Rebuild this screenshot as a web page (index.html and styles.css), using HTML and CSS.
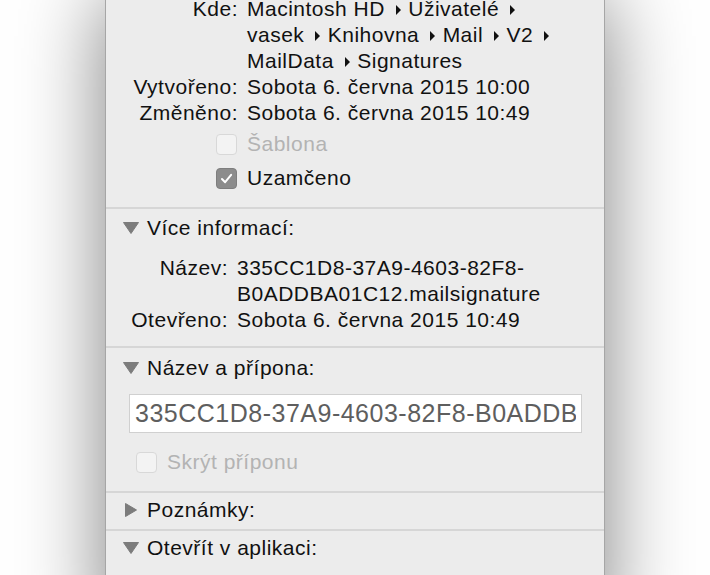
FILE: index.html
```html
<!DOCTYPE html>
<html lang="cs">
<head>
<meta charset="utf-8">
<title>Informace</title>
<link rel="stylesheet" href="styles.css">
</head>
<body>
<div class="window">
  <section class="sec sec-general">
    <div class="info info-general">
      <span class="label">Kde:</span>
      <span class="value path">
        <span class="seg">Macintosh HD<svg class="crumb" viewBox="0 0 5 10"><polygon points="0,0 5,5 0,10"/></svg></span>
        <span class="seg">Uživatelé<svg class="crumb" viewBox="0 0 5 10"><polygon points="0,0 5,5 0,10"/></svg></span>
        <span class="seg">vasek<svg class="crumb" viewBox="0 0 5 10"><polygon points="0,0 5,5 0,10"/></svg></span>
        <span class="seg">Knihovna<svg class="crumb" viewBox="0 0 5 10"><polygon points="0,0 5,5 0,10"/></svg></span>
        <span class="seg">Mail<svg class="crumb" viewBox="0 0 5 10"><polygon points="0,0 5,5 0,10"/></svg></span>
        <span class="seg">V2<svg class="crumb" viewBox="0 0 5 10"><polygon points="0,0 5,5 0,10"/></svg></span>
        <span class="seg">MailData<svg class="crumb" viewBox="0 0 5 10"><polygon points="0,0 5,5 0,10"/></svg></span>
        <span class="seg">Signatures</span>
      </span>
      <span class="label">Vytvořeno:</span>
      <span class="value">Sobota 6. června 2015 10:00</span>
      <span class="label">Změněno:</span>
      <span class="value">Sobota 6. června 2015 10:49</span>
    </div>
    <div class="info info-general checks">
      <span class="cb cb-disabled"></span>
      <span class="value muted">Šablona</span>
      <span class="cb cb-checked"><svg viewBox="0 0 21 21"><path d="M5.5 11 L9 14.6 L15.6 6.4"/></svg></span>
      <span class="value">Uzamčeno</span>
    </div>
  </section>

  <section class="sec sec-more">
    <div class="disclosure">
      <span class="tri"><svg class="tri-down" viewBox="0 0 16 12"><polygon points="0.5,0.5 15.5,0.5 8,11.5"/></svg></span>
      <span>Více informací:</span>
    </div>
    <div class="info info-more">
      <span class="label">Název:</span>
      <span class="value">335CC1D8-37A9-4603-82F8-<wbr>B0ADDBA01C12.mailsignature</span>
      <span class="label">Otevřeno:</span>
      <span class="value">Sobota 6. června 2015 10:49</span>
    </div>
  </section>

  <section class="sec sec-name">
    <div class="disclosure">
      <span class="tri"><svg class="tri-down" viewBox="0 0 16 12"><polygon points="0.5,0.5 15.5,0.5 8,11.5"/></svg></span>
      <span>Název a přípona:</span>
    </div>
    <div class="name-body">
      <input class="namefield" type="text" value="335CC1D8-37A9-4603-82F8-B0ADDBA01C12.mailsignature" readonly>
      <div class="checkrow">
        <span class="cb cb-disabled"></span>
        <span class="muted">Skrýt příponu</span>
      </div>
    </div>
  </section>

  <section class="sec sec-notes">
    <div class="disclosure">
      <span class="tri"><svg class="tri-right" viewBox="0 0 12 14"><polygon points="0.5,0.5 11.5,7 0.5,13.5"/></svg></span>
      <span>Poznámky:</span>
    </div>
  </section>

  <section class="sec sec-open">
    <div class="disclosure">
      <span class="tri"><svg class="tri-down" viewBox="0 0 16 12"><polygon points="0.5,0.5 15.5,0.5 8,11.5"/></svg></span>
      <span>Otevřít v aplikaci:</span>
    </div>
  </section>
</div>
</body>
</html>
```

FILE: styles.css
```css
html, body {
  margin: 0;
  padding: 0;
  background: #ffffff;
}

body {
  overflow: hidden;
}

.window {
  width: 500px;
  box-sizing: border-box;
  margin: -4px auto 0;
  background: #ececec;
  border-left: 1px solid #a6a6a6;
  border-right: 1px solid #a6a6a6;
  box-shadow: 0 0 80px rgba(0, 0, 0, 0.5);
  font-family: "Helvetica Neue", "Liberation Sans", Arial, sans-serif;
  font-size: 21px;
  line-height: 26px;
  letter-spacing: 0.5px;
  color: #111111;
}

.sec + .sec {
  border-top: 2px solid #d6d6d6;
}

/* general */
.sec-general {
  padding: 0 0 16px;
}

.info {
  display: grid;
  column-gap: 9px;
  padding-right: 37px;
}

.info-general {
  grid-template-columns: 132px 1fr;
}

.info-more {
  grid-template-columns: 122px 1fr;
  margin-top: 14px;
}

.label {
  text-align: right;
  white-space: nowrap;
}

.seg {
  white-space: nowrap;
}

.crumb {
  width: 5px;
  height: 10px;
  margin: 0 1px 0 11px;
  vertical-align: 1px;
  fill: #111111;
}

.checks {
  margin-top: 5px;
  row-gap: 8px;
}

.checks .cb {
  justify-self: end;
  align-self: center;
  margin-right: 1px;
}

.cb {
  display: inline-block;
  box-sizing: border-box;
  width: 21px;
  height: 21px;
  border-radius: 4px;
  border: 1px solid #d8d8d8;
  background: #f3f3f3;
}

.cb-checked {
  background: #8c8c8c;
  border-color: #7e7e7e;
}

.cb-checked svg {
  display: block;
  width: 19px;
  height: 19px;
  fill: none;
  stroke: #ffffff;
  stroke-width: 2.2;
  stroke-linecap: round;
  stroke-linejoin: round;
}

.muted {
  color: #b3b3b3;
}

/* disclosure headers */
.disclosure {
  display: flex;
  align-items: center;
  gap: 8px;
  padding-left: 17px;
  height: 26px;
}

.tri {
  width: 16px;
  display: flex;
  justify-content: center;
}

.tri svg {
  display: block;
  fill: #7c7c7c;
  stroke: #7c7c7c;
  stroke-width: 1;
  stroke-linejoin: round;
}

.tri-down {
  width: 16px;
  height: 12px;
}

.tri-right {
  width: 12px;
  height: 14px;
}

.sec-more {
  padding: 6px 0 13px;
}

.sec-name {
  padding: 7px 0 16px;
}

.name-body {
  padding: 0 22px 0 23px;
}

.namefield {
  display: block;
  box-sizing: border-box;
  width: 100%;
  height: 39px;
  margin: 13px 0 0;
  padding: 0 5px;
  border: 1px solid #d0d0d0;
  border-radius: 0;
  background: #ffffff;
  font-family: "Helvetica Neue", "Liberation Sans", Arial, sans-serif;
  font-size: 25px;
  letter-spacing: 0.5px;
  color: #5e5e5e;
  outline: none;
}

.checkrow {
  display: flex;
  align-items: center;
  gap: 10px;
  margin-top: 16px;
  padding-left: 7px;
}

.sec-notes {
  padding: 4px 0 6px;
}

.sec-open {
  padding: 4px 0 80px;
}
```
